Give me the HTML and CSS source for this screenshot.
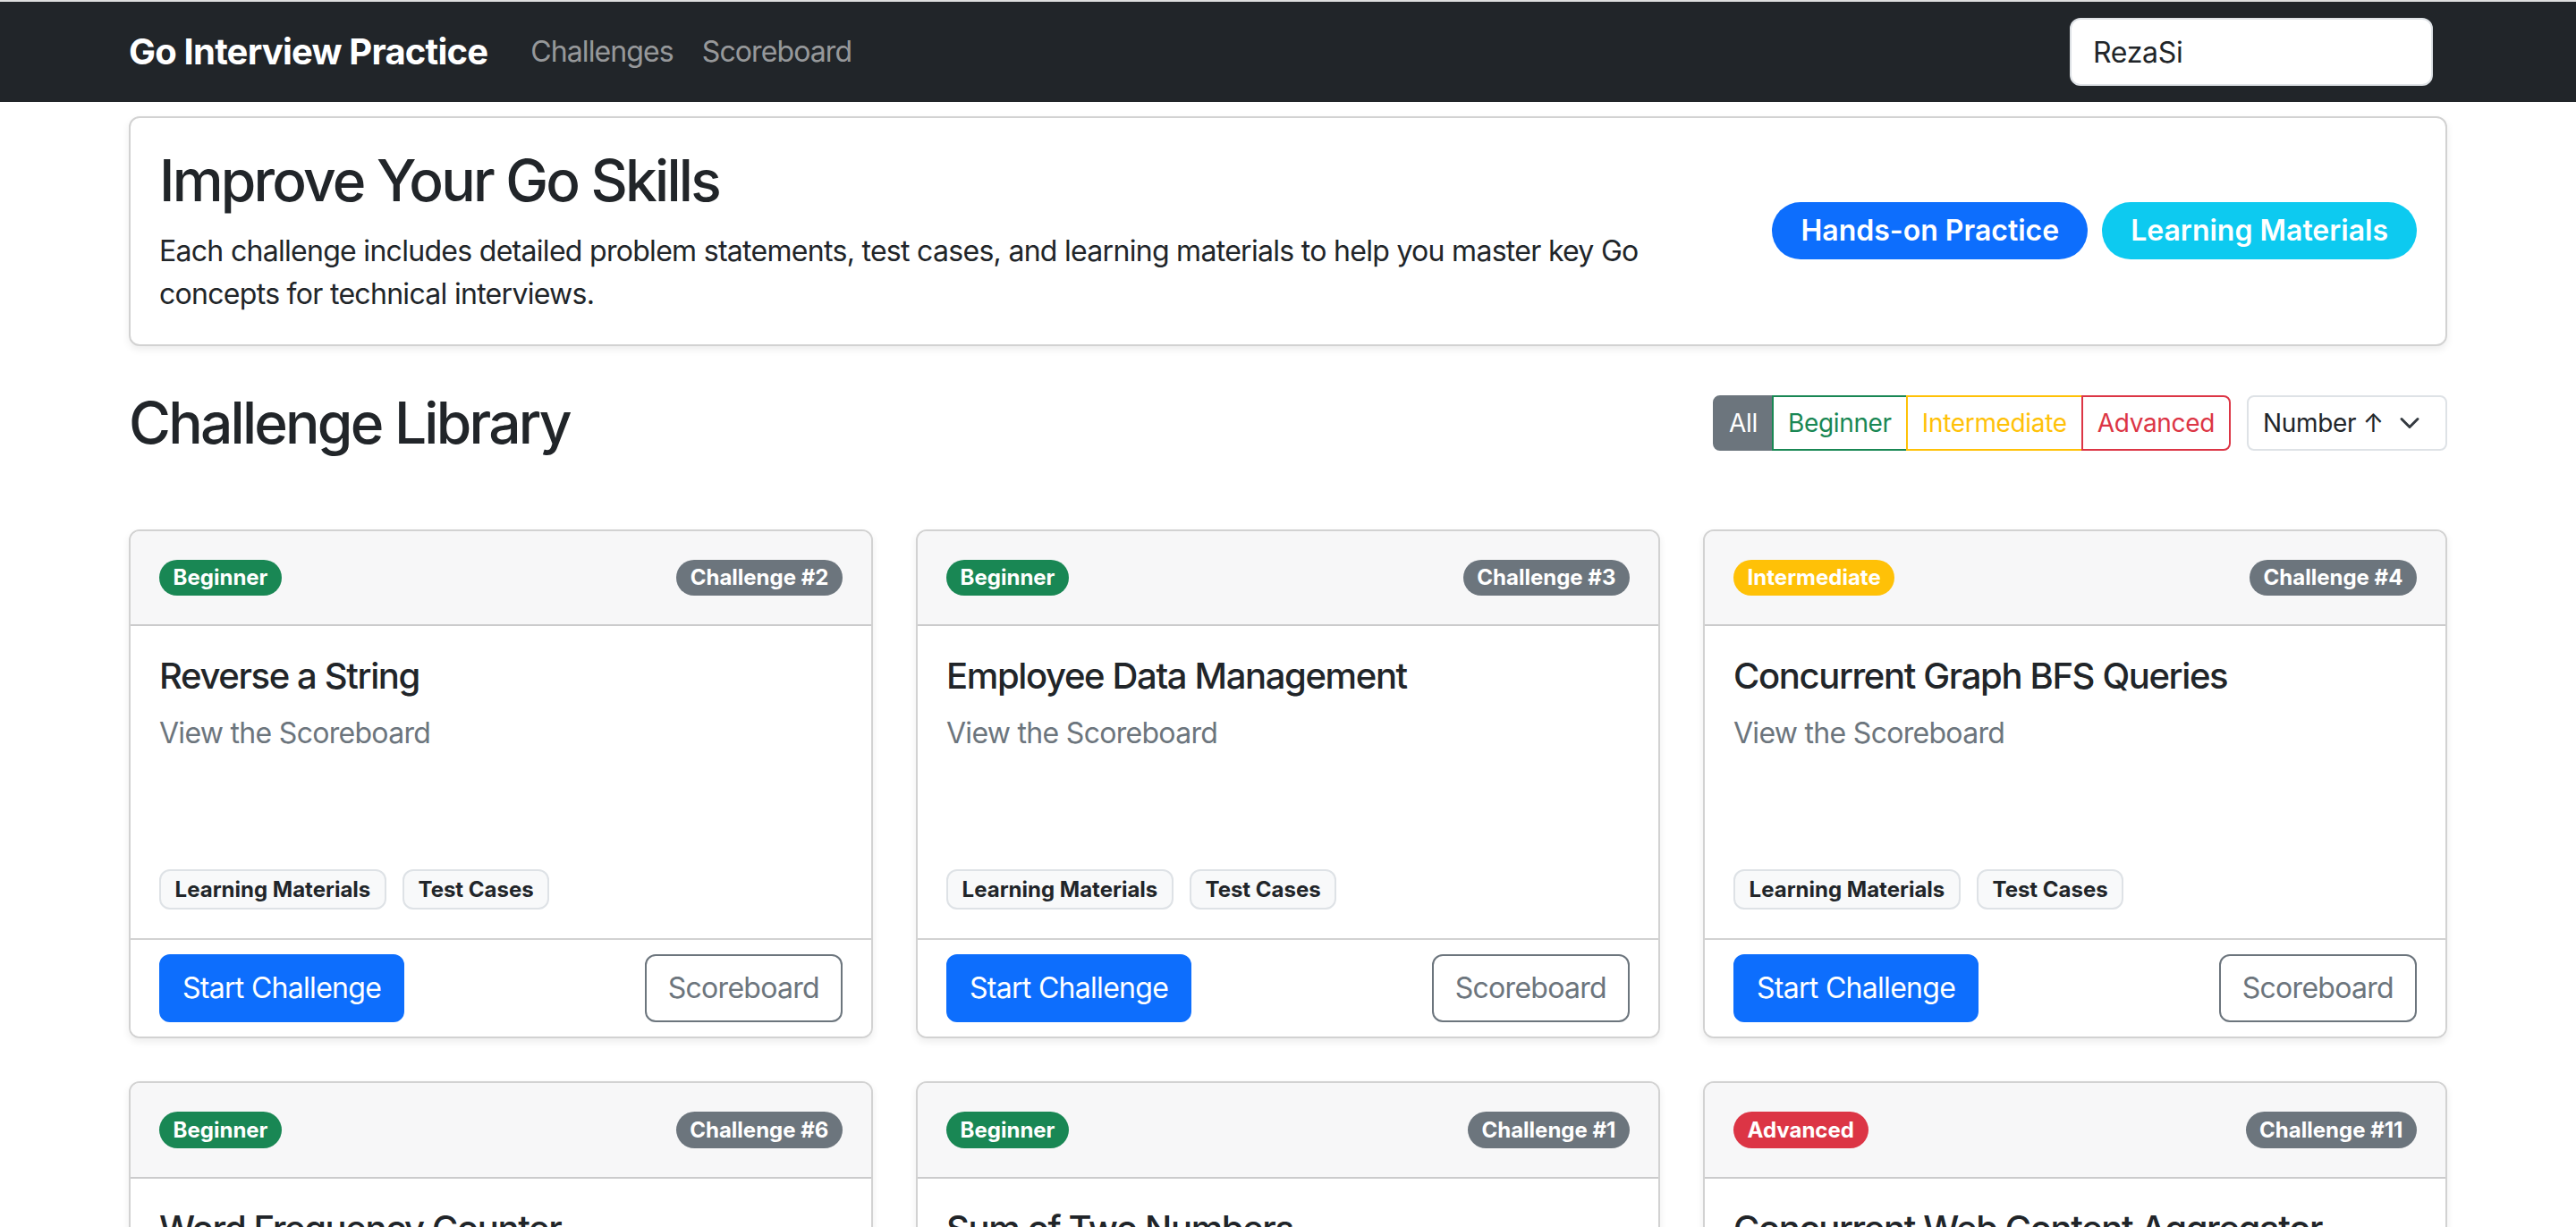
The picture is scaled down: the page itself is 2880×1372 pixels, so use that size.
FILE: index.html
```html
<!DOCTYPE html>
<html lang="en">
<head>
<meta charset="utf-8">
<title>Go Interview Practice</title>
<link rel="stylesheet" href="styles.css">
</head>
<body>
<nav class="navbar">
  <div class="container nav-inner">
    <a class="brand" href="#">Go Interview Practice</a>
    <ul class="nav-links">
      <li><a href="#">Challenges</a></li>
      <li><a href="#">Scoreboard</a></li>
    </ul>
    <form class="user-form">
      <input class="user-input" type="text" value="RezaSi">
    </form>
  </div>
</nav>

<main class="container page">
  <section class="hero">
    <div class="hero-text">
      <h2 class="hero-title">Improve Your Go Skills</h2>
      <p class="hero-lead">Each challenge includes detailed problem statements, test cases, and learning materials to help you master key Go concepts for technical interviews.</p>
    </div>
    <div class="hero-actions">
      <a class="pill-btn pill-primary" href="#">Hands-on Practice</a>
      <a class="pill-btn pill-info" href="#">Learning Materials</a>
    </div>
  </section>

  <div class="library-head">
    <h2 class="library-title">Challenge Library</h2>
    <div class="library-tools">
      <div class="filter-group">
        <button class="fbtn fbtn-all">All</button>
        <button class="fbtn fbtn-beginner">Beginner</button>
        <button class="fbtn fbtn-intermediate">Intermediate</button>
        <button class="fbtn fbtn-advanced">Advanced</button>
      </div>
      <div class="sort-select">
        <span>Number ↑</span>
        <svg class="chevron" viewBox="0 0 16 16" width="16" height="12"><path fill="none" stroke="#343a40" stroke-linecap="round" stroke-linejoin="round" stroke-width="2" d="m2 5 6 6 6-6"/></svg>
      </div>
    </div>
  </div>

  <div class="challenge-grid">
    <article class="ch-card">
      <header class="ch-head"><span class="badge lvl-beginner">Beginner</span><span class="badge badge-num">Challenge #2</span></header>
      <div class="ch-body">
        <h5 class="ch-title">Reverse a String</h5>
        <p class="ch-desc">View the Scoreboard</p>
        <div class="ch-tags"><span class="tag">Learning Materials</span><span class="tag">Test Cases</span></div>
      </div>
      <footer class="ch-foot"><a class="btn btn-primary" href="#">Start Challenge</a><a class="btn btn-outline" href="#">Scoreboard</a></footer>
    </article>
    <article class="ch-card">
      <header class="ch-head"><span class="badge lvl-beginner">Beginner</span><span class="badge badge-num">Challenge #3</span></header>
      <div class="ch-body">
        <h5 class="ch-title">Employee Data Management</h5>
        <p class="ch-desc">View the Scoreboard</p>
        <div class="ch-tags"><span class="tag">Learning Materials</span><span class="tag">Test Cases</span></div>
      </div>
      <footer class="ch-foot"><a class="btn btn-primary" href="#">Start Challenge</a><a class="btn btn-outline" href="#">Scoreboard</a></footer>
    </article>
    <article class="ch-card">
      <header class="ch-head"><span class="badge lvl-intermediate">Intermediate</span><span class="badge badge-num">Challenge #4</span></header>
      <div class="ch-body">
        <h5 class="ch-title">Concurrent Graph BFS Queries</h5>
        <p class="ch-desc">View the Scoreboard</p>
        <div class="ch-tags"><span class="tag">Learning Materials</span><span class="tag">Test Cases</span></div>
      </div>
      <footer class="ch-foot"><a class="btn btn-primary" href="#">Start Challenge</a><a class="btn btn-outline" href="#">Scoreboard</a></footer>
    </article>
    <article class="ch-card">
      <header class="ch-head"><span class="badge lvl-beginner">Beginner</span><span class="badge badge-num">Challenge #6</span></header>
      <div class="ch-body">
        <h5 class="ch-title">Word Frequency Counter</h5>
        <p class="ch-desc">View the Scoreboard</p>
        <div class="ch-tags"><span class="tag">Learning Materials</span><span class="tag">Test Cases</span></div>
      </div>
      <footer class="ch-foot"><a class="btn btn-primary" href="#">Start Challenge</a><a class="btn btn-outline" href="#">Scoreboard</a></footer>
    </article>
    <article class="ch-card">
      <header class="ch-head"><span class="badge lvl-beginner">Beginner</span><span class="badge badge-num">Challenge #1</span></header>
      <div class="ch-body">
        <h5 class="ch-title">Sum of Two Numbers</h5>
        <p class="ch-desc">View the Scoreboard</p>
        <div class="ch-tags"><span class="tag">Learning Materials</span><span class="tag">Test Cases</span></div>
      </div>
      <footer class="ch-foot"><a class="btn btn-primary" href="#">Start Challenge</a><a class="btn btn-outline" href="#">Scoreboard</a></footer>
    </article>
    <article class="ch-card">
      <header class="ch-head"><span class="badge lvl-advanced">Advanced</span><span class="badge badge-num">Challenge #11</span></header>
      <div class="ch-body">
        <h5 class="ch-title">Concurrent Web Content Aggregator</h5>
        <p class="ch-desc">View the Scoreboard</p>
        <div class="ch-tags"><span class="tag">Learning Materials</span><span class="tag">Test Cases</span></div>
      </div>
      <footer class="ch-foot"><a class="btn btn-primary" href="#">Start Challenge</a><a class="btn btn-outline" href="#">Scoreboard</a></footer>
    </article>
  </div>
</main>
</body>
</html>
```

FILE: styles.css
```css
html {
  zoom: 2;
}

*, *::before, *::after {
  box-sizing: border-box;
}

body {
  margin: 0;
  font-family: "Inter", "Liberation Sans", sans-serif;
  font-size: 16px;
  line-height: 1.5;
  letter-spacing: -0.022em;
  color: #212529;
  background: #fff;
  border-top: 1px solid #dedede;
}

.container {
  max-width: 1320px;
  margin: 0 auto;
  padding: 0 12px;
}

/* Navbar */
.navbar {
  background: #212529;
  padding: 8px 0;
}

.nav-inner {
  display: flex;
  align-items: center;
}

.brand {
  font-size: 20px;
  font-weight: 700;
  line-height: 30px;
  letter-spacing: -0.02em;
  padding: 5px 0;
  margin-right: 16px;
  color: #fff;
  text-decoration: none;
}

.nav-links {
  display: flex;
  list-style: none;
  margin: 0;
  padding: 0;
}

.nav-links a {
  display: block;
  padding: 8px;
  letter-spacing: -0.028em;
  color: rgba(255, 255, 255, 0.55);
  text-decoration: none;
}

.user-form {
  margin: 0 8px 0 auto;
}

.user-input {
  display: block;
  width: 203px;
  height: 38px;
  padding: 6px 12px;
  font: inherit;
  letter-spacing: -0.01em;
  color: #212529;
  background: #fff;
  border: 1px solid #dee2e6;
  border-radius: 6px;
}

/* Page */
.page {
  padding-top: 8px;
}

.hero {
  display: flex;
  align-items: center;
  gap: 24px;
  padding: 16px;
  border: 1px solid rgba(0, 0, 0, 0.175);
  border-radius: 6px;
  box-shadow: 0 2px 4px rgba(0, 0, 0, 0.075);
  margin-bottom: 24px;
}

.hero-text {
  flex: 0 0 833px;
}

.hero-title {
  margin: 0 0 8px;
  font-size: 32px;
  font-weight: 500;
  line-height: 1.2;
  letter-spacing: -0.043em;
}

.hero-lead {
  margin: 0;
}

.hero-actions {
  flex: 1;
  display: flex;
  justify-content: flex-end;
  gap: 8px;
}

.pill-btn {
  display: inline-block;
  padding: 4px 16px;
  font-weight: 600;
  line-height: 24px;
  letter-spacing: 0;
  color: #fff;
  border-radius: 50rem;
  text-decoration: none;
  white-space: nowrap;
}

.pill-primary {
  background: #0d6efd;
}

.pill-info {
  background: #0dcaf0;
}

/* Library header */
.library-head {
  display: flex;
  justify-content: space-between;
  align-items: center;
  margin-bottom: 40px;
}

.library-title {
  margin: 0;
  font-size: 32px;
  font-weight: 500;
  line-height: 1.2;
  letter-spacing: -0.043em;
}

.library-tools {
  display: flex;
  align-items: center;
  gap: 9px;
}

.filter-group {
  display: flex;
}

.fbtn {
  font-family: inherit;
  font-size: 14px;
  line-height: 21px;
  letter-spacing: -0.012em;
  padding: 4px 8px;
  background: transparent;
  border: 1px solid;
  border-radius: 0;
  cursor: pointer;
}

.fbtn + .fbtn {
  margin-left: -1px;
}

.fbtn-all {
  background: #6c757d;
  border-color: #6c757d;
  color: #fff;
  border-radius: 4px 0 0 4px;
}

.fbtn-beginner {
  color: #198754;
  border-color: #198754;
}

.fbtn-intermediate {
  color: #ffc107;
  border-color: #ffc107;
}

.fbtn-advanced {
  color: #dc3545;
  border-color: #dc3545;
  border-radius: 0 4px 4px 0;
}

.sort-select {
  display: flex;
  align-items: center;
  justify-content: space-between;
  width: 112px;
  height: 31px;
  padding: 4px 12px 4px 8px;
  font-size: 14px;
  line-height: 21px;
  letter-spacing: -0.012em;
  border: 1px solid #dee2e6;
  border-radius: 4px;
}

.chevron {
  display: block;
}

/* Cards */
.challenge-grid {
  display: grid;
  grid-template-columns: repeat(3, 1fr);
  gap: 24px;
}

.ch-card {
  display: flex;
  flex-direction: column;
  border: 1px solid rgba(0, 0, 0, 0.175);
  border-radius: 6px;
  box-shadow: 0 2px 4px rgba(0, 0, 0, 0.075);
  overflow: hidden;
}

.ch-head {
  display: flex;
  justify-content: space-between;
  align-items: center;
  padding: 16px;
  background: #f7f7f8;
  border-bottom: 1px solid rgba(0, 0, 0, 0.175);
}

.badge {
  display: inline-block;
  padding: 4.2px 7.8px;
  font-size: 12px;
  font-weight: 700;
  line-height: 1;
  letter-spacing: 0;
  color: #fff;
  border-radius: 50rem;
  white-space: nowrap;
}

.lvl-beginner {
  background: #198754;
}

.lvl-intermediate {
  background: #ffc107;
}

.lvl-advanced {
  background: #dc3545;
}

.badge-num {
  background: #6c757d;
}

.ch-body {
  flex: 1;
  padding: 16px;
}

.ch-title {
  margin: 0 0 8px;
  font-size: 20px;
  font-weight: 500;
  line-height: 1.2;
  letter-spacing: -0.034em;
}

.ch-desc {
  margin: 0 0 16px;
  min-height: 72px;
  color: #6c757d;
}

.ch-tags {
  display: flex;
  gap: 9px;
}

.tag {
  display: inline-block;
  padding: 4.2px 7.8px;
  font-size: 12px;
  font-weight: 700;
  line-height: 1;
  letter-spacing: 0;
  color: #212529;
  background: #f8f9fa;
  border: 1px solid #dee2e6;
  border-radius: 6px;
}

.ch-foot {
  display: flex;
  justify-content: space-between;
  align-items: center;
  padding: 8px 16px;
  background: #fff;
  border-top: 1px solid rgba(0, 0, 0, 0.175);
}

.btn {
  display: inline-block;
  padding: 6px 12px;
  font-size: 16px;
  line-height: 24px;
  border: 1px solid transparent;
  border-radius: 6px;
  text-decoration: none;
}

.btn-primary {
  color: #fff;
  background: #0d6efd;
  border-color: #0d6efd;
}

.btn-outline {
  color: #6c757d;
  border-color: #6c757d;
}
```
